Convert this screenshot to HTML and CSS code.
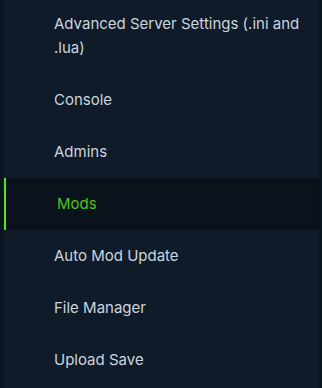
FILE: index.html
```html
<!DOCTYPE html>
<html>
<head>
<meta charset="utf-8">
<link rel="stylesheet" href="styles.css">
</head>
<body>
<div class="frame">
  <nav class="menu">
    <a class="item">Advanced Server Settings (.ini and .lua)</a>
    <a class="item">Console</a>
    <a class="item">Admins</a>
    <a class="item active">Mods</a>
    <a class="item">Auto Mod Update</a>
    <a class="item">File Manager</a>
    <a class="item">Upload Save</a>
  </nav>
</div>
</body>
</html>
```
FILE: styles.css
```css
html, body {
  margin: 0;
  padding: 0;
  background: #0b1520;
  height: 100%;
  overflow: hidden;
}
.frame {
  display: flex;
  padding: 0 3px 0 4px;
  height: 100%;
}
.menu {
  flex: 1;
  background: #0f1b28;
  display: flex;
  flex-direction: column;
  margin-top: -2px;
}
.item {
  display: block;
  padding: 14px 8px 14px 50px;
  font-family: Inter, "Noto Sans", sans-serif;
  font-size: 15px;
  font-weight: 400;
  line-height: 24px;
  color: #cbd5de;
  letter-spacing: 0;
}
.item.active {
  background: #0a121b;
  border-left: 2px solid #5fe11b;
  padding-left: 51px;
  color: #4cc51c;
}
```
